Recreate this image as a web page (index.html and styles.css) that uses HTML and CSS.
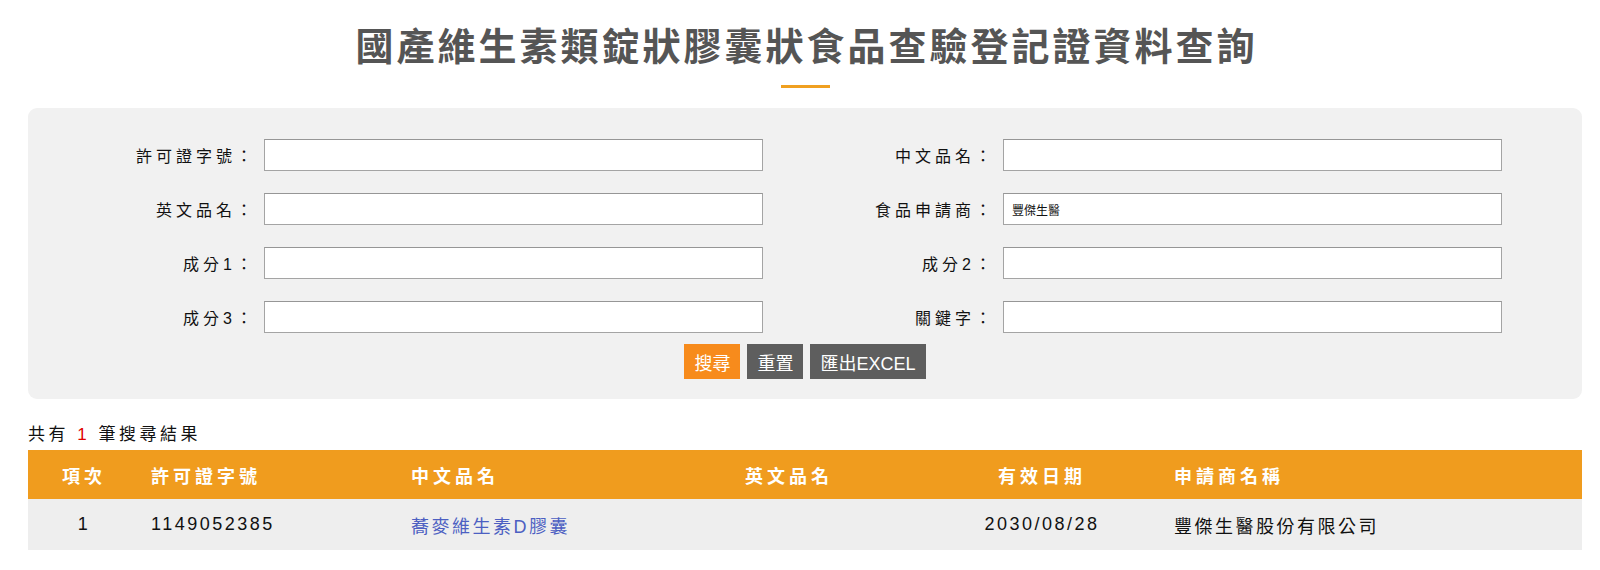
FILE: index.html
```html
<!DOCTYPE html>
<html lang="zh-Hant">
<head>
<meta charset="utf-8">
<title>國產維生素類錠狀膠囊狀食品查驗登記證資料查詢</title>
<link rel="stylesheet" href="styles.css">
</head>
<body>
<div class="page">
  <h1 class="title">國產維生素類錠狀膠囊狀食品查驗登記證資料查詢</h1>
  <div class="title-bar"></div>

  <form class="search-panel">
    <div class="form-grid">
      <label class="f-label">許可證字號：</label>
      <input class="f-input" type="text">
      <label class="f-label">中文品名：</label>
      <input class="f-input" type="text">

      <label class="f-label">英文品名：</label>
      <input class="f-input" type="text">
      <label class="f-label">食品申請商：</label>
      <input class="f-input" type="text" value="豐傑生醫">

      <label class="f-label">成分1：</label>
      <input class="f-input" type="text">
      <label class="f-label">成分2：</label>
      <input class="f-input" type="text">

      <label class="f-label">成分3：</label>
      <input class="f-input" type="text">
      <label class="f-label">關鍵字：</label>
      <input class="f-input" type="text">
    </div>
    <div class="btn-row">
      <button type="button" class="btn btn-search">搜尋</button>
      <button type="button" class="btn btn-gray">重置</button>
      <button type="button" class="btn btn-gray">匯出EXCEL</button>
    </div>
  </form>

  <div class="result-count">共有 <span class="count-num">1</span> 筆搜尋結果</div>

  <table class="result-table">
    <thead>
      <tr>
        <th class="c1">項次</th>
        <th class="c2">許可證字號</th>
        <th class="c3">中文品名</th>
        <th class="c4">英文品名</th>
        <th class="c5">有效日期</th>
        <th class="c6">申請商名稱</th>
      </tr>
    </thead>
    <tbody>
      <tr>
        <td class="c1">1</td>
        <td class="c2">1149052385</td>
        <td class="c3"><a class="prod-link" href="#">蕎麥維生素D膠囊</a></td>
        <td class="c4"></td>
        <td class="c5">2030/08/28</td>
        <td class="c6">豐傑生醫股份有限公司</td>
      </tr>
    </tbody>
  </table>
</div>
</body>
</html>
```

FILE: styles.css
```css
* { box-sizing: border-box; }

html, body {
  margin: 0;
  padding: 0;
  background: #ffffff;
  font-family: "Liberation Sans", "Noto Sans CJK TC", sans-serif;
  color: #111;
}

.page {
  padding: 0 18px 0 28px;
}

.title {
  margin: 0;
  padding-top: 24px;
  font-size: 38px;
  line-height: 46px;
  font-weight: bold;
  letter-spacing: 3px;
  text-indent: 3px;
  color: #555555;
  text-align: center;
}

.title-bar {
  width: 49px;
  height: 3px;
  background: #f0a020;
  margin: 15px auto 20px;
}

.search-panel {
  background: #f1f1f1;
  border-radius: 9px;
  padding: 31px 0 20px;
}

.form-grid {
  display: grid;
  grid-template-columns: 236px 499px 240px 499px;
  row-gap: 22px;
  align-items: center;
}

.f-label {
  text-align: right;
  padding-right: 8px;
  font-size: 16px;
  letter-spacing: 4px;
  color: #111;
  white-space: nowrap;
}

.f-input {
  height: 32px;
  width: 100%;
  margin: 0;
  border: 1px solid #a4a4a4;
  border-top-color: #969696;
  background: #fff;
  font-family: "Liberation Sans", "Noto Sans CJK TC", sans-serif;
  font-size: 12px;
  padding: 0 8px;
  color: #111;
}

.btn-row {
  display: flex;
  justify-content: center;
  gap: 7px;
  margin-top: 11px;
}

.btn {
  height: 35px;
  border: none;
  padding: 0 10px;
  font-family: "Liberation Sans", "Noto Sans CJK TC", sans-serif;
  font-size: 18px;
  color: #fff;
  cursor: pointer;
}

.btn-search { background: #f78b1c; }
.btn-gray { background: #5e5e5e; }

.result-count {
  margin-top: 23px;
  line-height: 26px;
  font-size: 17px;
  letter-spacing: 3.5px;
  color: #111;
}

.count-num { color: #e00000; }

.result-table {
  margin-top: 2px;
  width: 100%;
  border-collapse: collapse;
  table-layout: fixed;
}

.result-table th {
  background: #f09c1e;
  color: #fff;
  height: 49px;
  font-size: 18px;
  font-weight: bold;
  letter-spacing: 4px;
  text-align: left;
  padding: 0 0 0 11px;
}

.result-table td {
  background: #eeeeee;
  height: 51px;
  font-size: 18px;
  letter-spacing: 2.5px;
  color: #111;
  padding: 0 0 0 11px;
}

.result-table .c1 { width: 112px; text-align: center; padding-left: 0; }
.result-table .c2 { width: 260px; }
.result-table .c3 { width: 334px; }
.result-table .c4 { width: 187px; }
.result-table .c5 { width: 242px; text-align: center; padding-left: 0; }
.result-table .c6 { width: 419px; }

.prod-link {
  color: #4c5fc2;
  text-decoration: none;
}
```
